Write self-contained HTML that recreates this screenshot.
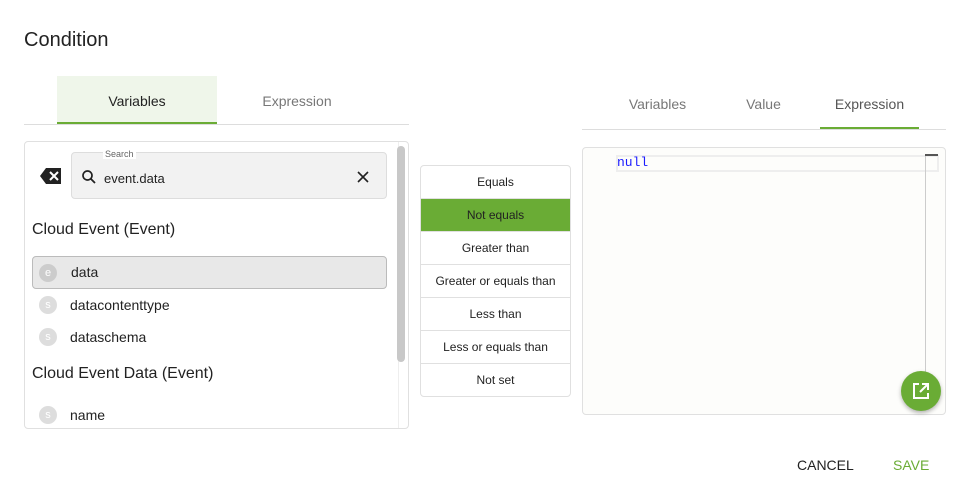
<!DOCTYPE html>
<html><head><style>
*{box-sizing:border-box;margin:0;padding:0}
body{width:969px;height:500px;background:#fff;font-family:"Liberation Sans",sans-serif;color:#222;position:relative;overflow:hidden}
.a{position:absolute}
.title{left:24px;top:29px;font-size:20px;color:#222}
.tab{position:absolute;text-align:center;font-size:14px;color:#777}
.panel{border:1px solid #e0e0e0;border-radius:4px}
.item{position:absolute;left:8px;height:30px;width:354px;font-size:14px;color:#222}
.dot{position:absolute;left:6px;top:6px;width:18px;height:18px;border-radius:50%;background:#ddd;color:#fff;font-size:11px;text-align:center;line-height:18px}
.op{height:33px;border-bottom:1px solid #e0e0e0;text-align:center;line-height:32px;font-size:12px;color:#222}
</style></head><body>
<div class="a title">Condition</div>

<div class="a" style="left:57px;top:76px;width:160px;height:48px;background:#eff6ea;border-bottom:2px solid #6aac35"></div>
<div class="tab" style="left:57px;top:93px;width:160px;color:#222">Variables</div>
<div class="tab" style="left:217px;top:93px;width:160px">Expression</div>
<div class="a" style="left:24px;top:124px;width:385px;height:1px;background:#ddd"></div>

<div class="a panel" style="left:24px;top:141px;width:385px;height:288px;overflow:hidden">
  <div class="a" style="left:373px;top:0;width:1px;height:288px;background:#eee"></div>
  <div class="a" style="left:372px;top:4px;width:8px;height:216px;border-radius:4px;background:#c8c8c8"></div>
  <svg class="a" style="left:14px;top:24px" width="24" height="20" viewBox="0 0 24 20"><path d="M7 2h15v16H7L1 10z" fill="#222"/><path d="M11 6l8 8M19 6l-8 8" stroke="#fff" stroke-width="2"/></svg>
  <div class="a" style="left:46px;top:10px;width:316px;height:47px;background:#f2f2f2;border:1px solid #ddd;border-radius:4px"></div>
  <div class="a" style="left:78px;top:7px;font-size:9px;color:#666;background:#fff;padding:0 2px">Search</div>
  <svg class="a" style="left:56px;top:27px" width="16" height="16" viewBox="0 0 16 16"><circle cx="6.5" cy="6.5" r="4.5" stroke="#222" stroke-width="1.7" fill="none"/><path d="M10 10l4 4" stroke="#222" stroke-width="1.8"/></svg>
  <div class="a" style="left:79px;top:29px;font-size:13px">event.data</div>
  <svg class="a" style="left:331px;top:28px" width="14" height="14" viewBox="0 0 14 14"><path d="M2 2l10 10M12 2L2 12" stroke="#222" stroke-width="1.6"/></svg>
  <div class="a" style="left:7px;top:79px;font-size:16px;color:#222">Cloud Event (Event)</div>
  <div class="item" style="top:114px;left:7px;width:355px;height:33px;background:#e8e8e8;border:1px solid #bbb;border-radius:4px"><span class="dot" style="background:#ccc;top:7px">e</span><span class="a" style="left:38px;top:7px">data</span></div>
  <div class="item" style="top:148px"><span class="dot">s</span><span class="a" style="left:37px;top:7px">datacontenttype</span></div>
  <div class="item" style="top:180px"><span class="dot">s</span><span class="a" style="left:37px;top:7px">dataschema</span></div>
  <div class="a" style="left:7px;top:223px;font-size:16px;color:#222">Cloud Event Data (Event)</div>
  <div class="item" style="top:258px"><span class="dot">s</span><span class="a" style="left:37px;top:7px">name</span></div>
</div>

<div class="a panel" style="left:420px;top:165px;width:151px;height:232px;overflow:hidden">
  <div class="op">Equals</div>
  <div class="op" style="background:#6aac35">Not equals</div>
  <div class="op">Greater than</div>
  <div class="op">Greater or equals than</div>
  <div class="op">Less than</div>
  <div class="op">Less or equals than</div>
  <div class="op" style="border:none">Not set</div>
</div>

<div class="tab" style="left:610px;top:96px;width:95px">Variables</div>
<div class="tab" style="left:716px;top:96px;width:95px">Value</div>
<div class="tab" style="left:820px;top:96px;width:99px;color:#555">Expression</div>
<div class="a" style="left:820px;top:127px;width:99px;height:2px;background:#6aac35"></div>
<div class="a" style="left:582px;top:129px;width:364px;height:1px;background:#ddd"></div>

<div class="a panel" style="left:582px;top:147px;width:364px;height:268px;background:#fdfdfb">
  <div class="a" style="left:33px;top:7px;width:323px;height:17px;border:2px solid #eee"></div>
  <div class="a" style="left:34px;top:7px;font-family:'Liberation Mono',monospace;font-size:13px;color:#1a1aff">null</div>
  <div class="a" style="left:342px;top:6px;width:1px;height:235px;background:#ccc"></div>
  <div class="a" style="left:342px;top:6px;width:13px;height:2px;background:#555"></div>
  <div class="a" style="left:318px;top:223px;width:40px;height:40px;border-radius:50%;background:#6aac35;box-shadow:0 2px 4px rgba(0,0,0,.3)">
    <svg class="a" style="left:10px;top:10px" width="20" height="20" viewBox="0 0 20 20"><path d="M8 3H3v14h14v-5" stroke="#fff" stroke-width="2" fill="none"/><path d="M11 3h6v6M17 3l-8 8" stroke="#fff" stroke-width="2" fill="none"/></svg>
  </div>
</div>

<div class="a" style="left:797px;top:457px;font-size:14px;color:#222">CANCEL</div>
<div class="a" style="left:893px;top:457px;font-size:14px;color:#6aac35">SAVE</div>
</body></html>
